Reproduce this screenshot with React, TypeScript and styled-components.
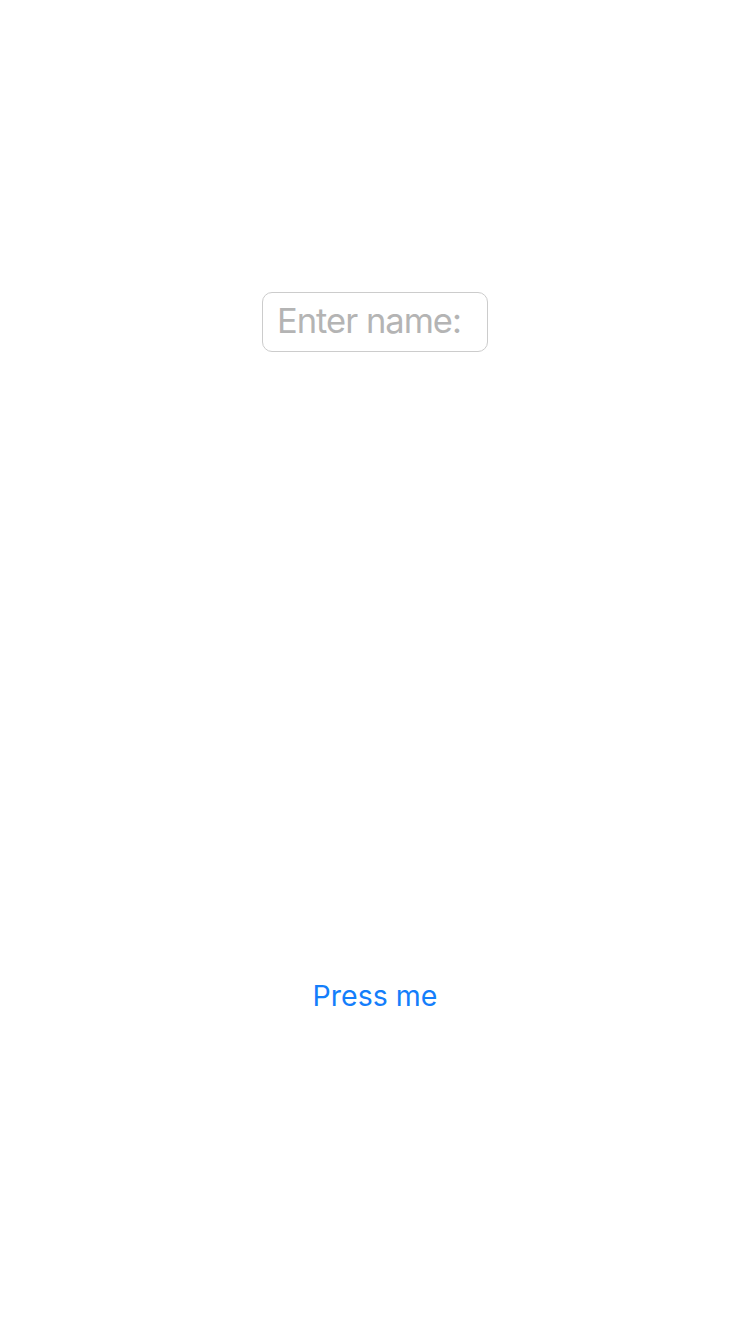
import React from "react";
import styled, { createGlobalStyle } from "styled-components";

const Global = createGlobalStyle`
  html, body { margin: 0; padding: 0; background: #fff; }
  body { font-family: Inter, "Noto Sans", sans-serif; }
`;

const Screen = styled.div`
  width: 750px;
  height: 1334px;
  display: flex;
  flex-direction: column;
  align-items: center;
  padding-top: 292px;
  box-sizing: border-box;
`;

const NameInput = styled.input`
  box-sizing: border-box;
  width: 226px;
  height: 60px;
  border: 1px solid #cccccc;
  border-radius: 10px;
  padding: 0 14px 3px;
  font-family: Inter, "Noto Sans", sans-serif;
  font-size: 34.5px;
  letter-spacing: -1px;
  color: #000;
  outline: none;
  background: #fff;
  &::placeholder { color: #b4b4b4; }
`;

const LinkButton = styled.button`
  margin-top: 624px;
  border: none;
  background: none;
  padding: 0;
  font-family: Inter, "Noto Sans", sans-serif;
  font-size: 28.5px;
  line-height: 40px;
  color: #147efb;
  cursor: pointer;
`;

export default function App() {
  return (
    <>
      <Global />
      <Screen>
        <NameInput placeholder="Enter name:" />
        <LinkButton>Press me</LinkButton>
      </Screen>
    </>
  );
}
